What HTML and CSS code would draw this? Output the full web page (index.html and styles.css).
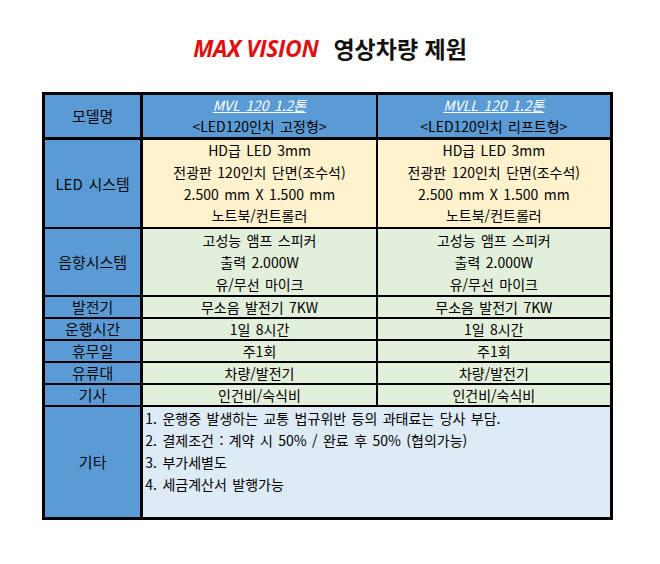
FILE: index.html
```html
<!DOCTYPE html>
<html lang="ko">
<head>
<meta charset="utf-8">
<link rel="stylesheet" href="styles.css">
</head>
<body>
<div class="page">
  <h1 class="title"><span class="brand">MAX VISION</span><span class="sub">영상차량 제원</span></h1>
  <table class="spec">
    <colgroup><col class="c1"><col class="c2"><col class="c3"></colgroup>
    <tr class="head">
      <th>모델명</th>
      <td><div class="ln"><span class="model">MVL 120 1.2톤</span></div><div class="ln">&lt;LED120인치 고정형&gt;</div></td>
      <td><div class="ln"><span class="model">MVLL 120 1.2톤</span></div><div class="ln">&lt;LED120인치 리프트형&gt;</div></td>
    </tr>
    <tr class="led">
      <th>LED 시스템</th>
      <td><div class="ln">HD급 LED 3mm</div><div class="ln">전광판 120인치 단면(조수석)</div><div class="ln">2.500 mm X 1.500 mm</div><div class="ln">노트북/컨트롤러</div></td>
      <td><div class="ln">HD급 LED 3mm</div><div class="ln">전광판 120인치 단면(조수석)</div><div class="ln">2.500 mm X 1.500 mm</div><div class="ln">노트북/컨트롤러</div></td>
    </tr>
    <tr class="green sound">
      <th>음향시스템</th>
      <td><div class="ln">고성능 앰프 스피커</div><div class="ln">출력 2.000W</div><div class="ln">유/무선 마이크</div></td>
      <td><div class="ln">고성능 앰프 스피커</div><div class="ln">출력 2.000W</div><div class="ln">유/무선 마이크</div></td>
    </tr>
    <tr class="green one">
      <th>발전기</th><td><div class="ln">무소음 발전기 7KW</div></td><td><div class="ln">무소음 발전기 7KW</div></td>
    </tr>
    <tr class="green one">
      <th>운행시간</th><td><div class="ln">1일 8시간</div></td><td><div class="ln">1일 8시간</div></td>
    </tr>
    <tr class="green one">
      <th>휴무일</th><td><div class="ln">주1회</div></td><td><div class="ln">주1회</div></td>
    </tr>
    <tr class="green one">
      <th>유류대</th><td><div class="ln">차량/발전기</div></td><td><div class="ln">차량/발전기</div></td>
    </tr>
    <tr class="green one">
      <th>기사</th><td><div class="ln">인건비/숙식비</div></td><td><div class="ln">인건비/숙식비</div></td>
    </tr>
    <tr class="etc">
      <th>기타</th>
      <td colspan="2"><div class="box"><div class="ln">1. 운행중 발생하는 교통 법규위반 등의 과태료는 당사 부담.</div><div class="ln">2. 결제조건 : 계약 시 50% / 완료 후 50% (협의가능)</div><div class="ln">3. 부가세별도</div><div class="ln">4. 세금계산서 발행가능</div></div></td>
    </tr>
  </table>
</div>
</body>
</html>
```

FILE: styles.css
```css
html, body {
  margin: 0;
  padding: 0;
  background: #ffffff;
}
body {
  font-family: "Noto Sans CJK KR", "Noto Sans", sans-serif;
  color: #000;
}
.page {
  width: 660px;
  padding-top: 32px;
}
.title {
  margin: 0;
  height: 60px;
  display: flex;
  justify-content: center;
  align-items: flex-start;
  gap: 15px;
  font-size: 23px;
  line-height: 32px;
  font-weight: 700;
}
.brand {
  color: #e01010;
  font-style: italic;
  font-family: "Open Sans", "Noto Sans", sans-serif;
  font-weight: 700;
  letter-spacing: -0.4px;
}
.sub {
  color: #111;
}
.spec {
  margin-left: 42px;
  width: 571px;
  border-collapse: collapse;
  border: 3px solid #000;
  table-layout: fixed;
  font-size: 14px;
  word-spacing: 1.5px;
}
.spec .c1 { width: 98px; }
.spec .c2 { width: 234px; }
.spec .c3 { width: 234px; }
.spec th, .spec td {
  border: 2px solid #000;
  padding: 0;
  text-align: center;
  vertical-align: middle;
}
.ln {
  height: 22px;
  line-height: 22px;
  white-space: nowrap;
  overflow: hidden;
}
.spec th {
  background: #5b9bd5;
  font-weight: 400;
  font-size: 15px;
  line-height: 20px;
  border-right-width: 3px;
  color: #0a0a0a;
}
.head td, .head th {
  background: #5b9bd5;
  border-bottom-width: 3px;
}
.head .ln {
  height: 21px;
  line-height: 21px;
}
.model {
  color: #fff;
  font-style: italic;
  font-weight: 400;
  text-decoration: underline;
  font-size: 14px;
}
.led td {
  background: #fff2cc;
}
.led .ln {
  height: 21.75px;
  line-height: 21.75px;
}
.green td {
  background: #e2efda;
}
.one .ln {
  height: 20px;
  line-height: 20px;
}
.etc td {
  background: #ddebf7;
  text-align: left;
  vertical-align: top;
}
.etc .box {
  height: 110px;
  padding-left: 2px;
}
```
